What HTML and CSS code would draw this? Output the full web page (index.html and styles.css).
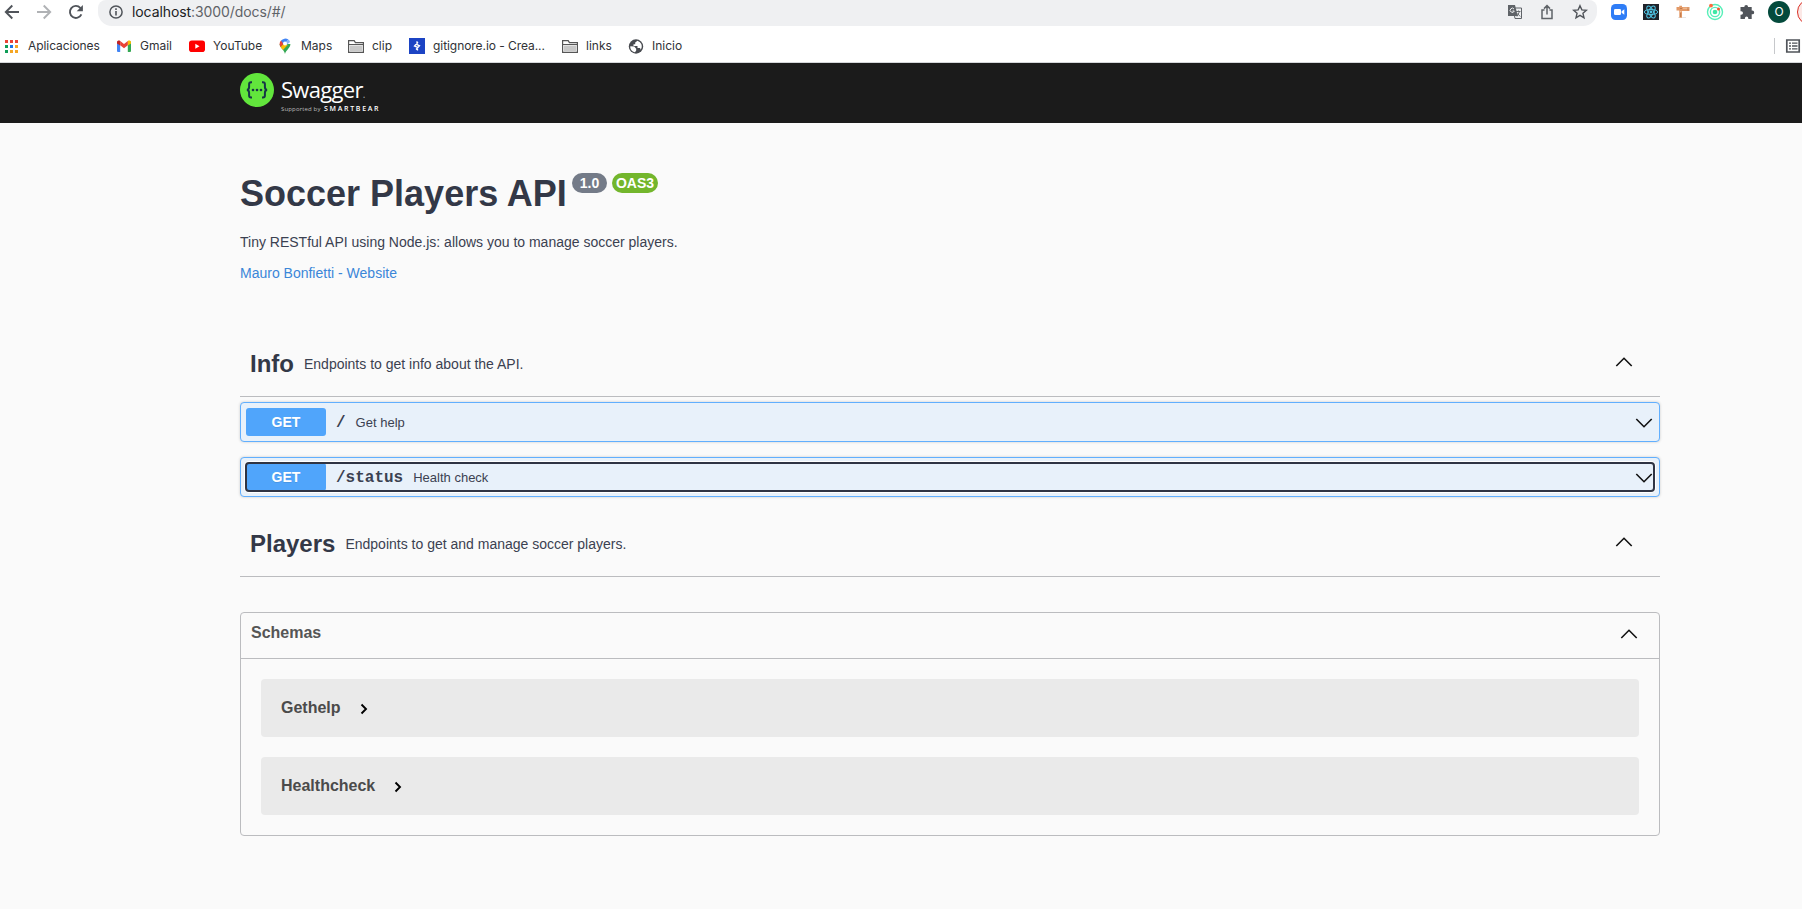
FILE: index.html
```html
<!DOCTYPE html>
<html lang="es">
<head>
<meta charset="utf-8">
<title>Swagger UI</title>
<link rel="stylesheet" href="styles.css">
</head>
<body>
<header class="browser">
  <div class="toolbar">
    <nav class="nav">
      <svg width="16" height="16" viewBox="0 0 16 16" fill="none" stroke="#50545a" stroke-width="1.9"><path d="M15 8H2.2M8.3 1.5 1.8 8l6.5 6.5"/></svg>
      <svg width="16" height="16" viewBox="0 0 16 16" fill="none" stroke="#b0b2b5" stroke-width="1.9"><path d="M1 8h12.8M7.7 1.5 14.2 8l-6.500 6.500"/></svg>
      <svg width="16" height="16" viewBox="0 0 16 16"><path d="M13.4 10.4A6 6 0 1 1 12.3 3.800L14 5.500" fill="none" stroke="#50545a" stroke-width="1.9"/><path d="M14.900 1v6.200H8.700z" fill="#50545a"/></svg>
    </nav>
    <div class="address">
      <svg width="14" height="14" viewBox="0 0 14 14"><circle cx="7" cy="7" r="6.100" fill="none" stroke="#50545a" stroke-width="1.500"/><path d="M6.200 6h1.600v4.600H6.200zM6.200 3.300h1.600v1.600H6.200z" fill="#50545a"/></svg>
      <span class="url"><b>localhost</b>:3000/docs/#/</span>
      <div class="page-tools">
        <svg width="14" height="14" viewBox="0 0 14 14"><path d="M5 3h8.500v10.500H7z" fill="#eff0f2" stroke="#5f6368" stroke-width="1"/><path d="M0 0h7l2.800 11H0z" fill="#5f6368"/><path d="M6 4a2.100 2.100 0 1 0 .3 2H4.500" stroke="#eff0f2" fill="none"/><path d="M8 6.500h4.500M10.500 5.500v1M9 11.500l2.500-5M9.300 8.500l3 3" stroke="#5f6368" fill="none" stroke-width=".9"/></svg>
        <svg width="14" height="16" viewBox="0 0 14 16" fill="none" stroke="#5f6368" stroke-width="1.500"><path d="M4.500 6H2v8.500h10V6H9.500M7 10.500V2M4 4.600l3-3 3 3"/></svg>
        <svg width="16" height="16" viewBox="0 0 16 16" fill="none" stroke="#50545a" stroke-width="1.400"><path d="m8 1.700 1.850 4.200 4.550.4-3.450 3 1.050 4.500L8 11.400l-4 2.400 1.050-4.500-3.450-3 4.550-.4z"/></svg>
      </div>
    </div>
    <div class="extensions">
      <svg width="16" height="16" viewBox="0 0 16 16"><rect width="16" height="16" rx="4.500" fill="#2f7df6"/><rect x="3" y="5" width="7" height="6" rx="1.300" fill="#fff"/><path d="m10.600 7.200 2.700-1.900v5.400l-2.700-1.900z" fill="#fff"/></svg>
      <svg width="16" height="16" viewBox="0 0 16 16"><path fill="#20232a" d="M0 0h16v16H0z"/><g fill="none" stroke="#4fc3e3" stroke-width="1"><ellipse cx="8" cy="8" rx="6.700" ry="2.600"/><ellipse cx="8" cy="8" rx="6.700" ry="2.600" transform="rotate(60 8 8)"/><ellipse cx="8" cy="8" rx="6.700" ry="2.600" transform="rotate(120 8 8)"/></g><circle cx="8" cy="8" r="1.400" fill="#4fc3e3"/></svg>
      <svg width="16" height="16" viewBox="0 0 16 16"><path fill="#e5e5e5" d="M3 13h8v1H3z"/><path fill="#e39a68" d="M1.500 3h2.800V1.800H7V3h7.500v4H7v6.700H4.300V6.500H1.500z"/><path d="M8 4.200h6M5 7.500h1.500" stroke="#f5c6a0"/><path d="M5 4.500h2M13 3.500v3M5.600 9v4" stroke="#c27b4d"/></svg>
      <svg width="18" height="18" viewBox="0 0 18 18"><g fill="none" stroke="#56efb8" stroke-width="1.400"><circle cx="9" cy="9" r="7.500"/><circle cx="9" cy="9" r="4.600"/></g><circle cx="9" cy="9" r="2.300" fill="#3ee8a5"/><circle cx="5" cy="2.600" r="1.900" fill="#ff6a3d"/><circle cx="12.500" cy="6" r="1.500" fill="#f5562c"/></svg>
      <svg width="16" height="16" viewBox="0 0 16 16"><path fill="#50545a" d="M5.300 3a1.900 1.900 0 0 1 3.800 0h3.600v3.500h.6a1.900 1.900 0 0 1 0 3.800h-.6V15H9.300v-.8a1.700 1.700 0 0 0-3.400 0v.8H1.500v-4.200h.7a1.800 1.800 0 0 0 0-3.600h-.7V3z"/></svg>
      <span class="avatar">O</span>
      <span class="update"></span>
    </div>
  </div>
  <div class="bookmarks">
    <div class="links">
      <a class="bm"><svg width="16" height="16" viewBox="0 0 16 16"><path fill="#ea4335" d="M1 2h3v3H1zM6 2h3v3H6zM11 2h3v3h-3z"/><path fill="#0f9d58" d="M1 7h3v3H1zM1 12h3v3H1z"/><path fill="#1a73e8" d="M6 7h3v3H6z"/><path fill="#f5a623" d="M11 7h3v3h-3zM6 12h3v3H6zM11 12h3v3h-3z"/></svg><span class="b1">Aplicaciones</span></a>
      <a class="bm"><svg width="16" height="16" viewBox="0 0 16 16"><path fill="#4285f4" d="M1 3.500h3.200V14H2a1 1 0 0 1-1-1z"/><path fill="#34a853" d="M11.800 3.500H15V13a1 1 0 0 1-1 1h-2.200z"/><path fill="#c5221f" d="M1 4.500C1 2.500 3 2 4.200 3v4.500L1 5.500z"/><path fill="#fbbc04" d="M15 4.500c0-2-2-2.500-3.200-1.500v4.500L15 5.500z"/><path fill="#ea4335" d="M4.200 3 8 6l3.800-3v4.300L8 10.200 4.200 7.300z"/></svg><span>Gmail</span></a>
      <a class="bm"><svg width="16" height="16" viewBox="0 0 16 16"><rect y="2.500" width="16" height="11.500" rx="2.800" fill="#f00"/><path d="M6.300 5.800v4.900l4.200-2.450z" fill="#fff"/></svg><span>YouTube</span></a>
      <a class="bm"><svg width="16" height="16" viewBox="0 0 16 16"><path fill="#34a853" d="M2.600 6C2.600 10 7 11 8 16c1-4 5.400-6 5.400-10z"/><path fill="#fbbc04" d="m3.600 9 4-4.600 3 2.600L6 12z"/><path fill="#ea4335" d="M4 2.600A5.400 5.400 0 0 0 3.600 9l4-4.600z"/><path fill="#4285f4" d="M4 2.600A5.400 5.400 0 0 1 11.300 1.600L7 7z"/><path fill="#8ab4f8" d="M11.300 1.600A5.400 5.400 0 0 1 13.100 4L9.500 7 8 4.500z"/><circle cx="8" cy="5.600" r="2" fill="#fff"/></svg><span>Maps</span></a>
      <a class="bm"><svg width="16" height="16" viewBox="0 0 16 16"><path d="M.6 14.400V2.600h5.600l1.200 2h8v9.800z" fill="#fff" stroke="#565656" stroke-width="1.200"/><path fill="#c8c8c8" d="M2 7.500h12v6H2z"/><path d="M1 6.500h14" stroke="#565656"/></svg><span>clip</span></a>
      <a class="bm"><svg width="16" height="16" viewBox="0 0 16 16"><path fill="#1c44c4" d="M0 0h16v16H0z"/><path d="M8 3.200v3.300l2.500 1.300L7 11.500M8.500 12.500V9.300L5.500 8 9 4.200" fill="none" stroke="#fff" stroke-width="1.300"/></svg><span class="b6">gitignore.io - Crea...</span></a>
      <a class="bm"><svg width="16" height="16" viewBox="0 0 16 16"><path d="M.6 14.400V2.600h5.600l1.200 2h8v9.800z" fill="#fff" stroke="#565656" stroke-width="1.200"/><path fill="#c8c8c8" d="M2 7.500h12v6H2z"/><path d="M1 6.500h14" stroke="#565656"/></svg><span>links</span></a>
      <a class="bm"><svg width="16" height="16" viewBox="0 0 16 16"><circle cx="8" cy="8.500" r="7.200" fill="#484b50"/><path fill="#fff" d="M9.500 2.700 7.200 4.500v1.700H5.500V8h4v2h2.700v1.800l1.300-1.500c1-3.500-.5-6-4-7.600zM2.300 8.300l4 .1 1.900 2.300v1.700L7 14.200C4.200 13.800 2 11.500 2.300 8.300z"/></svg><span>Inicio</span></a>
    </div>
    <div class="reading">
      <svg width="16" height="16" viewBox="0 0 16 16"><path d="M1.800 2h12.400v12H1.800z" fill="#fff" stroke="#50545a" stroke-width="1.700"/><path d="M4 5.200h2M7 5.200h5.500M4 8h2M7 8h5.500M4 10.800h2M7 10.800h5.500" stroke="#50545a" stroke-width="1.300"/></svg>
    </div>
  </div>
</header>

<div class="topbar">
  <div class="brand">
    <svg class="mark" width="34" height="34" viewBox="0 0 34 34"><circle cx="17" cy="17" r="17" fill="#62e63c"/><g fill="none" stroke="#173647" stroke-width="2"><path d="M12 9.200h-1q-1.900 0-1.900 2v2.900q0 2.600-2.200 2.800 2.200.2 2.200 2.800v2.900q0 2 1.900 2h1M22 9.200h1q1.900 0 1.900 2v2.900q0 2.600 2.200 2.800-2.200.2-2.200 2.800v2.900q0 2-1.900 2h-1"/></g><g fill="#173647"><circle cx="13" cy="17" r="1.300"/><circle cx="17" cy="17" r="1.300"/><circle cx="21" cy="17" r="1.300"/></g></svg>
    <div class="wordmark">
      <div class="name">Swagger<span class="dot">.</span></div>
      <div class="support"><span class="by">Supported by</span><span class="bear">SMARTBEAR</span></div>
    </div>
  </div>
</div>

<main class="wrapper">
  <section class="info">
    <div class="title-row"><h1>Soccer Players API</h1><span class="badge version">1.0</span><span class="badge oas">OAS3</span></div>
    <p class="desc">Tiny RESTful API using Node.js: allows you to manage soccer players.</p>
    <a class="contact">Mauro Bonfietti - Website</a>
  </section>

  <section class="tag">
    <div class="tag-head"><h2>Info</h2><p>Endpoints to get info about the API.</p><svg class="chev" width="18" height="12" viewBox="0 0 18 12"><path d="M1.300 10 9 2.300l7.700 7.700"/></svg></div>
    <div class="op"><div class="op-row"><span class="method">GET</span><code>/</code><span class="sum">Get help</span><svg class="chev" width="18" height="12" viewBox="0 0 18 12"><path d="M1.300 2 9 9.700 16.700 2"/></svg></div></div>
    <div class="op"><div class="op-row focused"><span class="method">GET</span><code>/status</code><span class="sum">Health check</span><svg class="chev" width="18" height="12" viewBox="0 0 18 12"><path d="M1.300 2 9 9.700 16.700 2"/></svg></div></div>
  </section>

  <section class="tag players">
    <div class="tag-head"><h2>Players</h2><p>Endpoints to get and manage soccer players.</p><svg class="chev" width="18" height="12" viewBox="0 0 18 12"><path d="M1.300 10 9 2.300l7.700 7.700"/></svg></div>
  </section>

  <section class="schemas">
    <div class="schemas-head"><h3>Schemas</h3><svg class="chev" width="18" height="12" viewBox="0 0 18 12"><path d="M1.300 10 9 2.300l7.700 7.700"/></svg></div>
    <div class="models">
      <div class="model"><span>Gethelp</span><svg width="8" height="12" viewBox="0 0 8 12"><path d="m1.500 1.500 4.500 4.500-4.500 4.500"/></svg></div>
      <div class="model"><span>Healthcheck</span><svg width="8" height="12" viewBox="0 0 8 12"><path d="m1.500 1.500 4.500 4.500-4.500 4.500"/></svg></div>
    </div>
  </section>
</main>
</body>
</html>
```
FILE: styles.css
```css
* { box-sizing: border-box; }
body { margin: 0; height: 909px; overflow: hidden; background: #fafafa; color: #3b4151; font-family: "Liberation Sans", Arial, sans-serif; }
h1, h2, h3, p { margin: 0; }
svg { display: block; flex: none; }

.browser { height: 63px; background: #fff; border-bottom: 1px solid #d5d7da; font-family: Inter, sans-serif; overflow: hidden; }
.toolbar { display: flex; height: 26px; }
.nav { display: flex; gap: 16px; width: 98px; padding: 4px 0 0 4px; }
.address { display: flex; width: 1499px; height: 26px; padding: 0 7px 0 11px; background: #eff0f2; border-radius: 8px 8px 14px 14px; align-items: flex-start; }
.address > svg { margin-top: 5px; }
.url { margin-left: 9px; font-size: 14px; line-height: 24px; letter-spacing: -.09px; color: #5f6368; white-space: nowrap; }
.url b { font-weight: 400; color: #202124; }
.page-tools { display: flex; gap: 18px; margin-left: auto; padding: 4px 2px 0 0; }
.page-tools svg:first-child { margin-top: 1px; }
.extensions { display: flex; gap: 16px; padding: 4px 0 0 14px; width: 205px; overflow: hidden; }
.extensions svg:nth-child(4) { margin: -1px -1px 0; }
.avatar { flex: none; width: 22px; height: 22px; margin: -3px 0 0 -3px; border-radius: 50%; background: #044a3c; color: #fff; font-size: 12px; line-height: 22px; text-align: center; }
.update { flex: none; width: 28px; height: 26px; margin: -5px 0 0 -9px; border: 1px solid #d93025; border-radius: 13px; background: #fce8e6; }

.bookmarks { display: flex; justify-content: space-between; height: 36px; padding: 0 1px 0 4px; }
.links { display: grid; grid-template-columns: 112px 73px 88px 71px 61px 153px 66px 60px; height: 36px; margin-top: 2px; }
.bm { display: flex; align-items: center; gap: 8px; height: 36px; font-size: 12px; color: #303236; white-space: nowrap; }
.bm svg { margin-top: 0; }
.bm span { margin-top: -1px; }
.b1, .b6 { letter-spacing: -.06px; }
.reading { display: flex; align-items: center; height: 16px; margin-top: 12px; padding-left: 10px; border-left: 1px solid #c6c8cb; }

.topbar { height: 60px; padding: 10px 240px; background: #1b1b1b; }
.brand { display: flex; gap: 7px; color: #fff; }
.wordmark { font-family: "Open Sans", sans-serif; }
.name { height: 30px; font-size: 22px; line-height: 32px; font-weight: 400; letter-spacing: -.7px; }
.dot { font-size: 10px; color: #aaa; }
.support { display: flex; gap: 2px; height: 10px; line-height: 10px; margin-top: 1px; white-space: nowrap; }
.by { font-size: 6px; color: #bbb; width: 41px; letter-spacing: .15px; }
.bear { font-size: 7px; font-weight: 600; letter-spacing: 1.700px; }

.wrapper { width: 1420px; margin: 0 auto 0 240px; }
.title-row { display: flex; height: 73px; padding-top: 50px; white-space: nowrap; }
h1 { width: 332px; font-size: 36px; line-height: 41px; font-weight: 700; color: #333847; }
.badge { height: 20px; margin-right: 5px; border-radius: 10px; color: #fff; font-size: 14px; line-height: 20px; font-weight: 700; text-align: center; }
.version { width: 35px; background: #747b88; }
.oas { width: 46px; background: #73b62c; }
.info { height: 218px; }
.desc { margin-top: 38px; font-size: 14px; line-height: 16px; }
.contact { display: block; margin-top: 15px; font-size: 14px; line-height: 16px; color: #3b86d8; }

.tag-head { display: flex; height: 56px; padding: 9px 27px 0 10px; border-bottom: 1px solid #bbbcbf; margin-bottom: 5px; white-space: nowrap; }
h2 { font-size: 24px; line-height: 28px; font-weight: 700; color: #333847; }
.tag-head p { margin: 6px 0 0 10px; font-size: 14px; line-height: 16px; }
.chev { margin-left: auto; fill: none; stroke: #111; stroke-width: 1.600; }
.tag-head .chev { margin-top: 6px; }
.op { height: 40px; margin-bottom: 15px; padding: 5px; border: 1px solid #61affe; border-radius: 4px; background: #e8f1fa; box-shadow: 0 0 3px rgba(0,0,0,.19); }
.op-row { display: flex; align-items: center; height: 28px; border-radius: 3px; white-space: nowrap; }
.focused { outline: 2px solid #2f3443; outline-offset: -1px; box-shadow: 0 0 0 2px #fff; }
.method { width: 80px; height: 28px; border-radius: 3px; background: #50a5fb; color: #fff; font-size: 14px; line-height: 28px; font-weight: 700; text-align: center; text-shadow: 0 1px 0 rgba(0,0,0,.1); }
.op code { margin: 2px 0 0 10px; font-family: "Liberation Mono", monospace; font-size: 16px; line-height: 18px; font-weight: 700; }
.sum { margin: 2px 0 0 10px; font-size: 13px; line-height: 16px; }
.op .chev { margin: 1px 1px 0 auto; }
.players { margin-top: 24px; }

.schemas { height: 224px; margin-top: 35px; border: 1px solid #bbbcbf; border-radius: 4px; }
.schemas-head { display: flex; height: 46px; padding: 11px 21px 0 10px; border-bottom: 1px solid #bbbcbf; }
h3 { font-size: 16px; line-height: 18px; font-weight: 700; color: #555; }
.schemas-head .chev { margin-top: 4px; }
.models { display: grid; gap: 20px; padding: 20px; }
.model { display: flex; align-items: flex-start; gap: 19px; height: 58px; padding: 20px; border-radius: 4px; background: #eaeaea; color: #4b4b4b; font-size: 16px; line-height: 18px; font-weight: 700; }
.model svg { margin-top: 4px; fill: none; stroke: #000; stroke-width: 1.900; }
```
